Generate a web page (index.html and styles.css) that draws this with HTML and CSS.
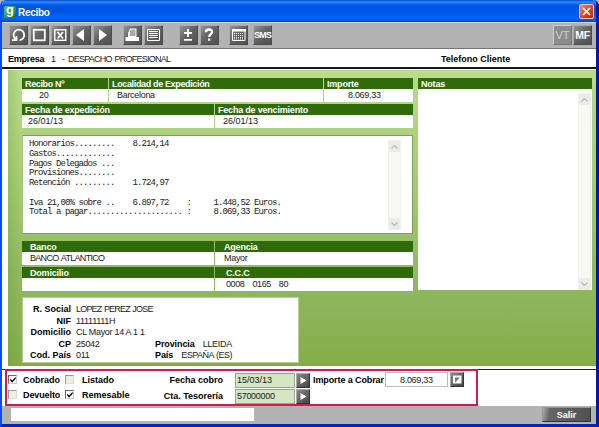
FILE: index.html
```
<!DOCTYPE html>
<html lang="es">

<head>
    <meta charset="utf-8">
    <title>Recibo</title>
    <link rel="stylesheet" href="styles.css">
</head>

<body>
    <div class="window">
        <div class="titlebar">
            <span class="logo">g</span>
            <span class="caption">Recibo</span>
            <button class="close"><svg width="9" height="9" viewBox="0 0 9 9"><path d="M1 1l7 7M8 1l-7 7" stroke="#fff" stroke-width="1.7" /></svg></button>
        </div>

        <div class="toolbar">
            <button><svg viewBox="0 0 19 20"><path d="M6.500 14A5.300 5.300 0 1 1 10.500 15.200" /><path d="M3 15.200h4.500v-4.200" /></svg></button>
            <button><svg viewBox="0 0 19 20"><rect x="3.8" y="4.8" width="11" height="10.5" /></svg></button>
            <button><svg viewBox="0 0 19 20"><rect x="3.8" y="4.8" width="11" height="10.5" stroke-width="1.4" /><path d="M6.500 7l5.500 6.500M12 7l-5.500 6.500" /></svg></button>
            <button><svg viewBox="0 0 19 20"><path class="solid" d="M12 4v12L4 10z" /></svg></button>
            <button class="last"><svg viewBox="0 0 19 20"><path class="solid" d="M6 4v12l8-6z" /></svg></button>
            <button><svg viewBox="0 0 19 20"><path class="solid" d="M2.500 12h2.500V8l2-4.500h6.500V12h2.500v4H2.500z" /><path class="paper" d="M7 6l1-1.500h4.500v6.500H6.500z" /></svg></button>
            <button class="last wide"><svg viewBox="0 0 19 20"><path class="thin" d="M3.500 4.500h12v11h-12zM5 6.500h9M5 8.500h9M5 10.500h9M5 12.500h9" /></svg></button>
            <button><svg viewBox="0 0 19 20"><path d="M5 8h8M9 4v8M5 14.800h8" /></svg></button>
            <button class="last"><svg viewBox="0 0 19 20"><path d="M5.800 7.200C6 3.500 12.500 3.700 12 7.300C11.700 9.400 9.200 9.200 9.200 12M9.200 13.500v2.300" stroke-width="2.300" /></svg></button>
            <button class="near"><svg viewBox="0 0 19 20"><path class="solid" d="M3 4h14v2.500H3z" /><path class="thin" d="M3.500 5v10.500h12.500V5" /><path class="dots" d="M5 8.500h9M5 10.500h9M5 12.500h9M5 14h9" /></svg></button>
            <button class="sms">SMS</button>
            <button class="vt">VT</button>
            <button class="mf">MF</button>
        </div>

        <div class="company">
            <b class="w-empresa">Empresa</b>
            <span class="number">1</span>
            <span>-</span>
            <span class="name">DESPACHO PROFESIONAL</span>
            <b class="phone">Telefono Cliente</b>
        </div>

        <div class="panel">
            <div class="receipt">
                <div class="row top">
                    <div class="cell"><h3 class="tight">Recibo Nº</h3><p class="in17">20</p></div>
                    <div class="cell"><h3 class="tight">Localidad de Expedición</h3><p class="in8">Barcelona</p></div>
                    <div class="cell"><h3>Importe</h3><p class="in23">8.069,33</p></div>
                </div>
                <div class="row dates">
                    <div class="cell"><h3>Fecha de expedición</h3><p class="date">26/01/13</p></div>
                    <div class="cell"><h3>Fecha de vencimiento</h3><p class="date in8">26/01/13</p></div>
                </div>

                <div class="details">
<pre>Honorarios.........    8.214,14
Gastos.............
Pagos Delegados ...
Provisiones........
Retención .........    1.724,97

Iva 21,00% sobre ..    6.897,72    :     1.448,52 Euros.
Total a pagar..................... :     8.069,33 Euros.</pre>
                    <div class="scroll">
                        <i><svg width="7" height="4"><path d="M.5 3.500l3-3 3 3" /></svg></i>
                        <i><svg width="7" height="4"><path d="M.5.5l3 3 3-3" /></svg></i>
                    </div>
                </div>

                <div class="row bank">
                    <div class="cell"><h3>Banco</h3><p class="caps">BANCO ATLANTICO</p></div>
                    <div class="cell"><h3>Agencia</h3><p>Mayor</p></div>
                </div>
                <div class="row bank">
                    <div class="cell"><h3>Domicilio</h3><p></p></div>
                    <div class="cell"><h3 class="ccc">C.C.C</h3><p class="account"><span>0008</span><span>0165</span><span>80</span></p></div>
                </div>

                <div class="client">
                    <b>R. Social</b><span class="caps2">LOPEZ PEREZ JOSE</span>
                    <b>NIF</b><span class="nif">11111111H</span>
                    <b>Domicilio</b><span class="addr">CL Mayor 14 A 1 1</span>
                    <b>CP</b><span>25042</span><span class="extra"><b>Provincia</b><span>LLEIDA</span></span>
                    <b>Cod. País</b><span>011</span><span class="extra"><b>País</b><span class="es">ESPAÑA (ES)</span></span>
                </div>
            </div>

            <div class="notes">
                <h3>Notas</h3>
                <div class="scroll">
                    <i><svg width="7" height="4"><path d="M.5 3.500l3-3 3 3" /></svg></i>
                    <i><svg width="7" height="4"><path d="M.5.5l3 3 3-3" /></svg></i>
                </div>
            </div>
        </div>

        <div class="payment">
            <div class="checks">
                <i class="check"><svg viewBox="0 0 9 9"><path d="M1.500 4l2 2.300 4-4.500" /></svg></i><b>Cobrado</b>
                <i class="check off"></i><b>Listado</b>
                <i class="check off"></i><b class="dev">Devuelto</b>
                <i class="check"><svg viewBox="0 0 9 9"><path d="M1.500 4l2 2.300 4-4.500" /></svg></i><b>Remesable</b>
            </div>
            <div class="fields">
                <b>Fecha cobro</b><span class="field date">15/03/13</span><button><svg viewBox="0 0 12 13"><path d="M3.500 3v7l6-3.500z" /></svg></button>
                <b>Cta. Tesorería</b><span class="field">57000000</span><button><svg viewBox="0 0 12 13"><path d="M3.500 3v7l6-3.500z" /></svg></button>
            </div>
            <div class="amount">
                <b>Importe a Cobrar</b>
                <span class="field">8.069,33</span>
                <button><svg viewBox="0 0 12 13"><path d="M2 2.500h8.500v8H2z" /><path d="M4 9.500V4.500h5z" fill="#777" /></svg></button>
            </div>
            <div class="highlight"></div>
        </div>

        <div class="statusbar">
            <div class="message"></div>
            <button>Salir</button>
        </div>
    </div>
</body>

</html>
```
FILE: styles.css
```
* {
    box-sizing: border-box;
}

body {
    margin: 0;
    font: 9px/12px "Liberation Sans", Arial, sans-serif;
    color: #222;
    background: #9cb4dc;
}

b {
    font-size: 9px;
    color: #000;
}

p, h3, pre {
    margin: 0;
}

button {
    padding: 0;
    flex: none;
    font-family: inherit;
}

svg {
    display: block;
}

.window {
    width: 599px;
    height: 427px;
    display: flex;
    flex-direction: column;
    overflow: hidden;
    border: solid #0831d9;
    border-width: 0 3px 3px 2px;
    border-color: #0831d9 #0019a5 #0524b8 #0a50e8;
    border-radius: 6px 6px 0 0;
    background: #fff;
}

.titlebar {
    height: 22px;
    flex: none;
    display: flex;
    align-items: center;
    padding: 1px 2px 0 2px;
    color: #fff;
    background: linear-gradient(#0847c8, #2c8cff 2px, #0458e8 5px, #0054e3 11px, #0066ff 18px, #0052e0 21px, #003cb8);
}

.logo {
    width: 12px;
    height: 12px;
    border-radius: 2px;
    background: linear-gradient(135deg, #6cc46a, #087518);
    font: bold 13px/8px "Liberation Sans", sans-serif;
    text-align: center;
}

.caption {
    margin: 2px auto 0 2px;
    font-size: 10px;
    font-weight: bold;
    letter-spacing: -0.3px;
}

.close {
    width: 15px;
    height: 15px;
    display: flex;
    align-items: center;
    justify-content: center;
    border: 1px solid #f4c4b8;
    border-radius: 2px;
    background: linear-gradient(135deg, #f09070, #d8401c 60%, #b83010);
}

/* toolbar */
.toolbar {
    height: 27px;
    flex: none;
    display: flex;
    align-items: flex-start;
    gap: 2px;
    padding: 2px 4px 0 7px;
    background: #b3b3b3;
    border-top: 1px solid #d8d8d8;
    border-bottom: 1px solid #777;
}

.toolbar button {
    width: 19px;
    height: 20px;
    border: 1px solid;
    border-color: #aaa #4c4c4c #4c4c4c #aaa;
    background: linear-gradient(135deg, #959595, #646464 45%, #505050);
    color: #fff;
    font-size: 9px;
    font-weight: bold;
}

.toolbar svg {
    width: 19px;
    height: 20px;
    margin: -1px;
    fill: none;
    stroke: #fff;
    stroke-width: 1.8;
}

.toolbar .solid {
    fill: #fff;
    stroke: none;
}

.toolbar .paper {
    fill: #aaa;
    stroke: none;
}

.toolbar .thin {
    stroke-width: 1;
}

.toolbar .dots {
    stroke-width: 1;
    stroke-dasharray: 1 1;
}

.toolbar .last {
    margin-right: 9px;
}

.toolbar .wide {
    margin-right: 14px;
}

.toolbar .near {
    margin: 0 3px 0 -1px;
}

.toolbar .sms {
    font-size: 9px;
    letter-spacing: -0.8px;
}

.toolbar .vt {
    margin: 0 -1px 0 auto;
    border-color: #ccc #777 #777 #ccc;
    background: #8c8c8c;
    color: #d0d0d0;
    font-size: 11px;
    font-weight: normal;
}

.toolbar .mf {
    font-size: 10.5px;
    letter-spacing: -0.3px;
}

.company {
    height: 20px;
    flex: none;
    display: flex;
    align-items: center;
    padding: 2px 0 0 6px;
    border-bottom: 2px solid #181818;
}

.w-empresa {
    width: 43px;
    letter-spacing: -0.25px;
}

.number {
    width: 11px;
}

.name {
    margin-left: 3px;
    width: 373px;
    letter-spacing: -0.75px;
    word-spacing: 1px;
}

/* green panel */
.panel {
    height: 296px;
    flex: none;
    display: flex;
    align-items: flex-start;
    gap: 5px;
    margin: 1px 0 0 6px;
    padding: 8px 4px 0 14px;
    background: linear-gradient(90deg, rgba(100, 150, 50, 0.25), transparent 12px),
        linear-gradient(#badc8e, #a3cb70 40%, #8fb960 70%, #8ab357 85%, #83ad46);
}

.receipt {
    width: 391px;
}

h3 {
    height: 11px;
    padding-left: 3px;
    background: #2f6b0a;
    color: #fff;
    font: bold 9px/12px "Liberation Sans", Arial, sans-serif;
    letter-spacing: -0.2px;
}

.tight {
    letter-spacing: -0.35px;
}

.row {
    display: grid;
    gap: 1px;
    margin-bottom: 2px;
}

.top {
    grid-template-columns: 86px 214px 1fr;
}

.dates {
    grid-template-columns: 192px 1fr;
    margin-bottom: 7px;
}

.bank {
    grid-template-columns: 192px 1fr;
}

.cell p {
    height: 13px;
    padding-left: 6px;
    background: #fff;
    line-height: 12px;
    letter-spacing: -0.3px;
}

.bank h3,
.bank .cell p {
    padding-left: 8px;
}

.bank .cell + .cell h3,
.bank .cell + .cell p {
    padding-left: 9px;
}

.bank .cell + .cell .ccc,
.bank .cell + .cell .account {
    padding-left: 11px;
}

.cell .in17 {
    padding-left: 17px;
}

.cell .in8 {
    padding-left: 8px;
}

.cell .in23 {
    padding-left: 24px;
}

.cell .date,
.field.date {
    letter-spacing: 0;
}

.cell .caps {
    letter-spacing: -0.7px;
    word-spacing: 1px;
}

.cell .account {
    display: flex;
    gap: 8px;
    letter-spacing: -0.4px;
}

.details {
    height: 99px;
    display: flex;
    justify-content: space-between;
    margin-bottom: 7px;
    padding: 4px 11px 3px 6px;
    background: #fff;
    border: 1px solid #7da153;
    border-left-color: #a5c47d;
}

pre {
    font: 9px/9.75px "Liberation Mono", monospace;
    letter-spacing: -0.9px;
}

.scroll {
    width: 13px;
    display: flex;
    flex-direction: column;
    justify-content: space-between;
    border: 1px solid #f0f0ea;
    background: #f8f8f5;
}

.scroll i {
    height: 11px;
    display: flex;
    align-items: center;
    justify-content: center;
    background: #ebebe8;
}

.scroll path {
    fill: none;
    stroke: #bbb;
    stroke-width: 1.3;
}

.client {
    width: 277px;
    height: 66px;
    display: grid;
    grid-template-columns: 48px 74px 1fr;
    grid-auto-rows: 11.6px;
    column-gap: 5px;
    margin-top: 6px;
    padding: 5px 0 0;
    background: #fff;
    border: 1px solid #b5d092;
    letter-spacing: -0.3px;
    white-space: nowrap;
}

.client > b {
    grid-column: 1;
    text-align: right;
    letter-spacing: 0;
}

.client .caps2 {
    letter-spacing: -0.8px;
    word-spacing: 0.7px;
}

.extra {
    display: flex;
    gap: 8px;
}

.extra b {
    letter-spacing: -0.1px;
}

.es {
    letter-spacing: -0.5px;
    word-spacing: 0.5px;
}

.notes {
    width: 174px;
    height: 212px;
    display: flex;
    flex-direction: column;
    background: #fff;
}

.notes .scroll {
    flex: 1;
    align-self: flex-end;
    margin: 4px 1px 0 0;
}

/* payment data */
.payment {
    position: relative;
    height: 37px;
    flex: none;
    display: flex;
    margin-top: 3px;
    padding: 2px 0 0 6px;
    border-top: 1px solid #222;
}

.highlight {
    position: absolute;
    left: 3px;
    top: -1px;
    width: 473px;
    height: 37px;
    border: 2px solid #d31a50;
}

.checks {
    width: 142px;
    display: grid;
    grid-template-columns: 15px 42px 17px 1fr;
    grid-auto-rows: 15px;
    align-items: center;
}

.check {
    width: 9px;
    height: 9px;
    border: 1px solid;
    border-color: #666 #ccc #ccc #666;
}

.check.off {
    background: #eeeee2;
    border-color: #999 #ddd #ddd #999;
}

.check svg {
    width: 8px;
    height: 8px;
    fill: none;
    stroke: #000;
    stroke-width: 1.6;
}

.dev {
    letter-spacing: -0.1px;
}

.fields {
    width: 159px;
    display: grid;
    grid-template-columns: 85px 61px 14px;
    grid-auto-rows: 16px;
    align-items: center;
}

.fields b {
    margin-right: 12px;
    text-align: right;
    white-space: nowrap;
}

.field {
    height: 15px;
    border: 1px solid #9aa790;
    background: #d3e5c1;
    padding-left: 1px;
    line-height: 12px;
    letter-spacing: -0.3px;
}

.fields .field {
    margin-right: 1px;
}

.fields button,
.amount button {
    width: 14px;
    height: 15px;
    border: 1px solid;
    border-color: #aaa #333 #333 #aaa;
    background: linear-gradient(135deg, #888, #444);
}

.fields svg,
.amount svg {
    width: 12px;
    height: 13px;
    fill: #fff;
}

.amount {
    height: 15px;
    display: flex;
    align-items: center;
}

.amount b {
    width: 72px;
    margin-left: 4px;
    letter-spacing: -0.1px;
    white-space: nowrap;
}

.amount .field {
    width: 63px;
    padding-left: 14px;
    background: #fff;
    border-color: #bbb;
    line-height: 14px;
}

.amount button {
    margin-left: 2px;
}

.statusbar {
    flex: 1;
    display: flex;
    align-items: flex-start;
    justify-content: space-between;
    padding: 1px 5px 0 9px;
    background: #b3b3b3;
}

.message {
    width: 243px;
    height: 13px;
    margin-top: 1px;
    background: #fff;
}

.statusbar button {
    width: 49px;
    height: 15px;
    border: 1px solid;
    border-color: #999 #333 #333 #999;
    background: linear-gradient(100deg, #aaa, #666 15%, #505050);
    color: #fff;
    font-size: 9px;
    font-weight: bold;
}
```
